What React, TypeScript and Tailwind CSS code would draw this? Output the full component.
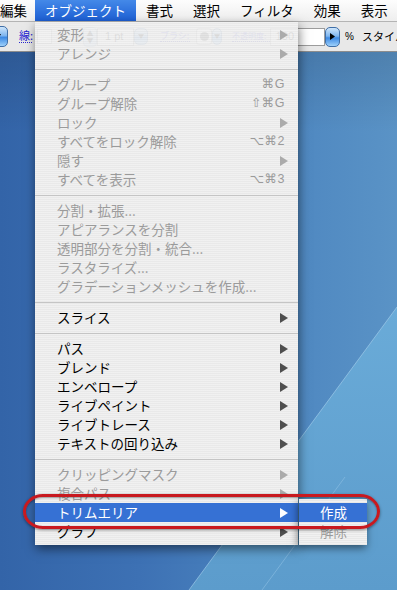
import React from "react";

type Row =
  | { sep: true }
  | {
      sep?: false;
      label: string;
      disabled?: boolean;
      arrow?: boolean;
      shortcut?: string;
      active?: boolean;
    };

const rows: Row[] = [
  { label: "変形", disabled: true, arrow: true },
  { label: "アレンジ", disabled: true, arrow: true },
  { sep: true },
  { label: "グループ", disabled: true, shortcut: "⌘G" },
  { label: "グループ解除", disabled: true, shortcut: "⇧⌘G" },
  { label: "ロック", disabled: true, arrow: true },
  { label: "すべてをロック解除", disabled: true, shortcut: "⌥⌘2" },
  { label: "隠す", disabled: true, arrow: true },
  { label: "すべてを表示", disabled: true, shortcut: "⌥⌘3" },
  { sep: true },
  { label: "分割・拡張...", disabled: true },
  { label: "アピアランスを分割", disabled: true },
  { label: "透明部分を分割・統合...", disabled: true },
  { label: "ラスタライズ...", disabled: true },
  { label: "グラデーションメッシュを作成...", disabled: true },
  { sep: true },
  { label: "スライス", arrow: true },
  { sep: true },
  { label: "パス", arrow: true },
  { label: "ブレンド", arrow: true },
  { label: "エンベロープ", arrow: true },
  { label: "ライブペイント", arrow: true },
  { label: "ライブトレース", arrow: true },
  { label: "テキストの回り込み", arrow: true },
  { sep: true },
  { label: "クリッピングマスク", disabled: true, arrow: true },
  { label: "複合パス", disabled: true, arrow: true },
  { label: "トリムエリア", arrow: true, active: true },
  { label: "グラフ", arrow: true },
];

function Arrow({ tone }: { tone: "on" | "off" | "active" }) {
  const cls =
    tone === "active" ? "fill-white" : tone === "off" ? "fill-[#ababab]" : "fill-[#4f4f4f]";
  return (
    <svg width="8" height="10" viewBox="0 0 8 10" className="shrink-0">
      <path d="M0 0L8 5L0 10Z" className={cls} />
    </svg>
  );
}

function MenuRow({ row }: { row: Exclude<Row, { sep: true }> }) {
  const base = "flex h-[19px] items-center pl-[22px] pr-[10px] text-[13.5px] leading-none";
  const color = row.active
    ? "bg-[#3671d4] text-white"
    : row.disabled
    ? "text-[#9b9b9b]"
    : "text-black";
  return (
    <div className={`${base} ${color}`}>
      <span className="flex-1 whitespace-nowrap">{row.label}</span>
      {row.shortcut && (
        <span className="mr-[3px] font-['Liberation_Sans','DejaVu_Sans',sans-serif] text-[12.5px] tracking-[0.5px]">
          {row.shortcut}
        </span>
      )}
      {row.arrow && <Arrow tone={row.active ? "active" : row.disabled ? "off" : "on"} />}
    </div>
  );
}

function Separator() {
  return (
    <div className="flex h-[12px] items-center">
      <div className="h-px w-full bg-[#c5c5c5]" />
    </div>
  );
}

function MenuBar() {
  const rest = ["書式", "選択", "フィルタ", "効果", "表示"];
  return (
    <div className="flex h-[22px] shrink-0 items-stretch overflow-hidden whitespace-nowrap border-b border-[#b4b4b4] bg-[linear-gradient(to_bottom,#fdfdfd,#eeeeee)] text-[13.5px] leading-none text-black">
      <div className="flex shrink-0 items-center pr-[8px]">編集</div>
      <div className="flex shrink-0 items-center bg-[linear-gradient(to_bottom,#4489e8,#1d5fd4)] px-[10px] text-white">
        オブジェクト
      </div>
      {rest.map((t) => (
        <div key={t} className="flex shrink-0 items-center px-[10px]">
          {t}
        </div>
      ))}
    </div>
  );
}

function AquaButton({ dir, w, h }: { dir: "down" | "right"; w: string; h: string }) {
  return (
    <div
      className={`flex shrink-0 items-center justify-center rounded-[5px] border border-[#3f6fa8] bg-[linear-gradient(to_bottom,#cfe6fb_0%,#7fb6ef_45%,#3d8ae4_55%,#9dd0fa_100%)] ${w} ${h}`}
    >
      {dir === "down" ? (
        <svg width="6" height="5" viewBox="0 0 6 5">
          <path d="M0 0H6L3 5Z" fill="#000" />
        </svg>
      ) : (
        <svg width="5" height="7" viewBox="0 0 5 7">
          <path d="M0 0L5 3.5L0 7Z" fill="#000" />
        </svg>
      )}
    </div>
  );
}

function Toolbar() {
  return (
    <div className="flex h-[30px] shrink-0 items-center overflow-hidden whitespace-nowrap border-b border-[#8d8d8d] bg-[#e8e8e8] text-[11px] leading-none">
      <div className="-ml-[12px] flex h-[21px] w-[20px] shrink-0 items-center justify-end rounded-[5px] border border-[#3f6fa8] bg-[linear-gradient(to_bottom,#cfe6fb_0%,#7fb6ef_45%,#3d8ae4_55%,#9dd0fa_100%)] pr-[6px]">
        <svg width="6" height="5" viewBox="0 0 6 5">
          <path d="M0 0H6L3 5Z" fill="#000" />
        </svg>
      </div>
      <span className="ml-[11px] w-[13px] shrink-0 border-b border-dotted border-[#2a2ad0] pb-[1px] text-[#2323d2]">
        線:
      </span>
      <div className="ml-[5px] h-[15px] w-[15px] shrink-0 border border-[#9a9a9a] bg-white" />
      <div className="ml-[31px] flex h-[20px] w-[14px] shrink-0 flex-col items-center justify-center rounded-[4px] border border-[#8aa0b8] bg-[linear-gradient(to_bottom,#e0eefc,#a9c9ee)] text-[7px] text-black">
        <span>▲</span>
        <span>▼</span>
      </div>
      <div className="flex h-[18px] w-[37px] shrink-0 items-center border border-[#9c9c9c] bg-white pl-[7px] font-['Liberation_Sans',sans-serif] text-[11px] text-black">
        1 pt
      </div>
      <AquaButton dir="down" w="w-[14px]" h="h-[17px]" />
      <span className="ml-[12px] w-[30px] shrink-0 border-b border-dotted border-[#2a2ad0] pb-[1px] text-[9px] text-[#2323d2]">
        ブラシ:
      </span>
      <div className="ml-[6px] flex h-[17px] w-[16px] shrink-0 items-center justify-center rounded-[3px] border border-[#9c9c9c] bg-white">
        <div className="h-[9px] w-[9px] rounded-full bg-[#333]" />
      </div>
      <AquaButton dir="down" w="w-[10px]" h="h-[17px]" />
      <span className="ml-[10px] w-[38px] shrink-0 border-b border-dotted border-[#2a2ad0] pb-[1px] text-[8px] text-[#2323d2]">
        不透明度:
      </span>
      <div className="flex h-[18px] w-[55px] shrink-0 items-center justify-end border border-[#9c9c9c] bg-white pr-[30px] font-['Liberation_Sans',sans-serif] text-[11px] text-black">
        100
      </div>
      <AquaButton dir="right" w="w-[15px]" h="h-[20px]" />
      <span className="ml-[5px] w-[7px] shrink-0 font-['Liberation_Sans',sans-serif] text-[10px] text-black">
        %
      </span>
      <span className="ml-[10px] shrink-0 text-[11px] text-black">スタイル</span>
    </div>
  );
}

function Desktop() {
  return (
    <div className="relative flex-1">
      <svg
        className="absolute inset-0 h-full w-full"
        viewBox="0 0 397 538"
        preserveAspectRatio="none"
      >
        <defs>
          <linearGradient id="base" x1="0" y1="0" x2="1" y2="0">
            <stop offset="0" stopColor="#3364a8" />
            <stop offset="0.35" stopColor="#3d71b4" />
            <stop offset="0.7" stopColor="#4d86c0" />
            <stop offset="1" stopColor="#5a93c6" />
          </linearGradient>
          <linearGradient id="wedge" x1="0" y1="0" x2="0" y2="1">
            <stop offset="0" stopColor="#6aabd8" />
            <stop offset="1" stopColor="#5c9ccc" />
          </linearGradient>
          <linearGradient id="shade" x1="0" y1="0" x2="0" y2="1">
            <stop offset="0" stopColor="#000" stopOpacity="0.12" />
            <stop offset="0.15" stopColor="#000" stopOpacity="0" />
          </linearGradient>
        </defs>
        <rect x="0" y="0" width="397" height="538" fill="url(#base)" />
        <polygon points="262,538 340,431 397,431 397,538" fill="#5a97ca" opacity="0.5" />
        <polygon points="189,538 397,255 397,538" fill="url(#wedge)" />
        <line x1="189" y1="538" x2="397" y2="255" stroke="#a8d2ee" strokeWidth="1" opacity="0.6" />
        <line x1="262" y1="538" x2="345" y2="425" stroke="#8fc0e4" strokeWidth="1" opacity="0.6" />
        <rect x="0" y="0" width="397" height="538" fill="url(#shade)" />
      </svg>
    </div>
  );
}

function ObjectMenu() {
  return (
    <div className="absolute left-[35px] top-[22px] w-[263px] bg-[repeating-linear-gradient(to_bottom,rgba(241,241,241,0.93)_0px,rgba(241,241,241,0.93)_1px,rgba(233,233,233,0.93)_1px,rgba(233,233,233,0.93)_2px),linear-gradient(to_bottom,transparent_0px,transparent_30px,#ececec_30px)] pb-[4px] pt-[3px] shadow-[1px_4px_10px_rgba(0,0,0,0.5)]">
      {rows.map((r, i) => (r.sep ? <Separator key={i} /> : <MenuRow key={i} row={r} />))}
    </div>
  );
}

function TrimSubmenu() {
  return (
    <div className="absolute left-[299px] top-[499px] w-[68px] bg-[repeating-linear-gradient(to_bottom,#f1f1f1_0px,#f1f1f1_1px,#e8e8e8_1px,#e8e8e8_2px)] pb-[4px] pt-[4px] text-[13.5px] leading-none shadow-[-1px_3px_8px_rgba(0,0,0,0.5)]">
      <div className="flex h-[19px] items-center bg-[#3671d4] pl-[21px] text-white">作成</div>
      <div className="flex h-[19px] items-center pl-[21px] text-[#9b9b9b]">解除</div>
    </div>
  );
}

export default function App() {
  return (
    <div className="relative flex h-[590px] w-[397px] flex-col overflow-hidden bg-[#3a6aad] font-['Noto_Sans_CJK_JP',sans-serif]">
      <MenuBar />
      <Toolbar />
      <Desktop />
      <ObjectMenu />
      <TrimSubmenu />
      <div className="pointer-events-none absolute left-[23px] top-[494px] h-[35px] w-[357px] rounded-[20px/50%] border-[3px] border-[#c8191f] shadow-[0_1px_3px_rgba(0,0,0,0.45),inset_0_1px_2px_rgba(0,0,0,0.35)]" />
    </div>
  );
}
